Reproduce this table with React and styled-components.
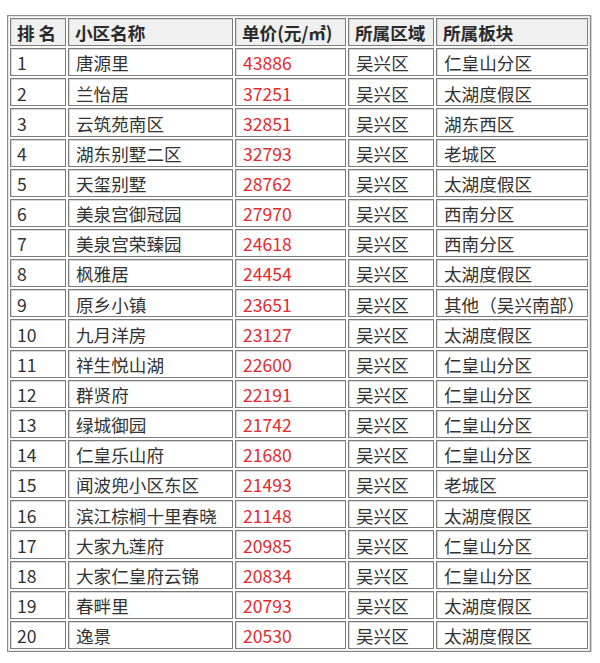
import React from 'react';
import styled, { createGlobalStyle } from 'styled-components';

const GlobalStyle = createGlobalStyle`
  html, body {
    margin: 0;
    padding: 0;
    background: #fff;
  }
  body {
    font-family: "Noto Sans CJK SC", "Noto Sans", sans-serif;
  }
`;

const rows = [
  ['1', '唐源里', '43886', '吴兴区', '仁皇山分区'],
  ['2', '兰怡居', '37251', '吴兴区', '太湖度假区'],
  ['3', '云筑苑南区', '32851', '吴兴区', '湖东西区'],
  ['4', '湖东别墅二区', '32793', '吴兴区', '老城区'],
  ['5', '天玺别墅', '28762', '吴兴区', '太湖度假区'],
  ['6', '美泉宫御冠园', '27970', '吴兴区', '西南分区'],
  ['7', '美泉宫荣臻园', '24618', '吴兴区', '西南分区'],
  ['8', '枫雅居', '24454', '吴兴区', '太湖度假区'],
  ['9', '原乡小镇', '23651', '吴兴区', '其他（吴兴南部）'],
  ['10', '九月洋房', '23127', '吴兴区', '太湖度假区'],
  ['11', '祥生悦山湖', '22600', '吴兴区', '仁皇山分区'],
  ['12', '群贤府', '22191', '吴兴区', '仁皇山分区'],
  ['13', '绿城御园', '21742', '吴兴区', '仁皇山分区'],
  ['14', '仁皇乐山府', '21680', '吴兴区', '仁皇山分区'],
  ['15', '闻波兜小区东区', '21493', '吴兴区', '老城区'],
  ['16', '滨江棕榈十里春晓', '21148', '吴兴区', '太湖度假区'],
  ['17', '大家九莲府', '20985', '吴兴区', '仁皇山分区'],
  ['18', '大家仁皇府云锦', '20834', '吴兴区', '仁皇山分区'],
  ['19', '春畔里', '20793', '吴兴区', '太湖度假区'],
  ['20', '逸景', '20530', '吴兴区', '太湖度假区'],
];

const widths = [56, 165, 111, 86, 152];

const Page = styled.div`
  padding: 15px 0 0 7px;
`;

const Table = styled.table`
  border-collapse: separate;
  border-spacing: 2px;
  border: 1px solid #8a8a8a;
  box-shadow: 1px 1px 0 #d4d4d4, inset 0 0 0 1px #e4e4e4;
  table-layout: fixed;
  font-size: 17.6px;
`;

const Head = styled.th`
  box-sizing: border-box;
  width: ${({ $w }) => $w}px;
  height: 28.15px;
  padding: 2px 0 0 6px;
  text-align: left;
  font-weight: 700;
  color: #2a2a2a;
  background: #f0f0f0;
  border: 1px solid #7c7c7c;
  box-shadow: inset 1px 1px 0 #d8d8d8;
  white-space: nowrap;
  line-height: 1;
`;

const Cell = styled.td`
  box-sizing: border-box;
  height: 28.15px;
  padding: 2px 0 0 ${({ $num }) => ($num ? 6 : 7)}px;
  color: ${({ $red }) => ($red ? '#e8282c' : '#333')};
  background: #fff;
  border: 1px solid #7c7c7c;
  box-shadow: inset 1px 1px 0 #d8d8d8;
  white-space: nowrap;
  line-height: 1;
`;

const headers = ['排 名', '小区名称', '单价(元/㎡)', '所属区域', '所属板块'];

export default function App() {
  return (
    <Page>
      <GlobalStyle />
      <Table>
        <thead>
          <tr>
            {headers.map((h, i) => (
              <Head key={h} $w={widths[i]}>{h}</Head>
            ))}
          </tr>
        </thead>
        <tbody>
          {rows.map((r) => (
            <tr key={r[0]}>
              <Cell $num>{r[0]}</Cell>
              <Cell>{r[1]}</Cell>
              <Cell $red>{r[2]}</Cell>
              <Cell>{r[3]}</Cell>
              <Cell>{r[4]}</Cell>
            </tr>
          ))}
        </tbody>
      </Table>
    </Page>
  );
}
